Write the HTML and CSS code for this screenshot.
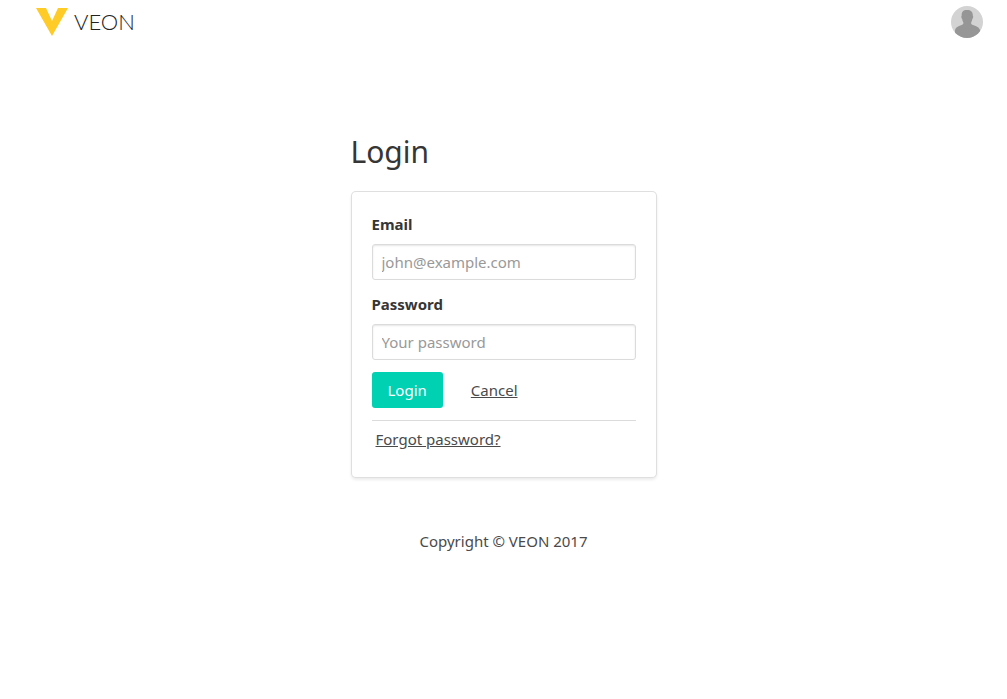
FILE: index.html
```html
<!DOCTYPE html>
<html lang="en">
<head>
<meta charset="utf-8">
<meta name="viewport" content="width=device-width, initial-scale=1">
<title>Login</title>
<link rel="stylesheet" href="styles.css">
</head>
<body>
<header class="nav">
  <a class="brand" href="#">
    <svg class="brand-mark" viewBox="0 0 32 28" aria-hidden="true"><path d="M0 0h10l6 13 6-13h10L16 28z" fill="#ffcb27"/></svg>
    <span class="brand-name">VEON</span>
  </a>
  <a class="account" href="#" aria-label="Account">
    <svg class="avatar" viewBox="0 0 32 32" aria-hidden="true">
      <defs><clipPath id="disc"><circle cx="16" cy="16" r="16"/></clipPath></defs>
      <g clip-path="url(#disc)">
        <rect width="32" height="32" fill="#d3d3d3"/>
        <path d="M16 4c-4 0-5.500 2-5.300 5.500-.7.500-.4 3 .5 3.500.2 1.400.5 2.300 1.100 3.200v1.800C11 19.500 5 20 4 24v8h25v-8c-1-4-7.500-4.500-8.800-6v-1.800c.6-.9.900-1.800 1.100-3.200.9-.5 1.200-3 .5-3.500C22 6 20 4 16 4z" fill="#969696"/>
      </g>
    </svg>
  </a>
</header>
<main class="content">
  <h1 class="title">Login</h1>
  <form class="box">
    <label class="label" for="email">Email</label>
    <input class="input" id="email" type="email" placeholder="john@example.com">
    <label class="label" for="password">Password</label>
    <input class="input" id="password" type="password" placeholder="Your password">
    <div class="actions">
      <button class="button" type="submit">Login</button>
      <a class="link" href="#">Cancel</a>
    </div>
    <div class="extra"><a class="link" href="#">Forgot password?</a></div>
  </form>
</main>
<footer class="footer">Copyright © VEON 2017</footer>
</body>
</html>
```
FILE: styles.css
```css
* { box-sizing: border-box; }
body {
  margin: 0;
  background: #fff;
  color: #363636;
  font-family: "Noto Sans", "Open Sans", sans-serif;
  font-size: 15px;
  line-height: 24px;
}
.nav {
  display: flex;
  justify-content: space-between;
  align-items: flex-start;
  padding: 6px 24px 0 36px;
}
.brand {
  display: flex;
  align-items: center;
  gap: 6px;
  padding-top: 2px;
  color: #222;
  text-decoration: none;
}
.brand-mark { width: 32px; height: 28px; }
.brand-name {
  font-family: Lato, sans-serif;
  font-size: 22px;
  font-weight: 300;
  line-height: 28px;
}
.account, .avatar { display: block; width: 32px; height: 32px; }
.content {
  width: 306px;
  max-width: 100%;
  margin: 96px auto 0;
}
.title {
  margin: 0 0 21px;
  font-size: 30px;
  font-weight: 400;
  line-height: 36px;
}
.box {
  padding: 21px;
  border-radius: 5px;
  box-shadow: 0 2px 3px rgba(10, 10, 10, .08), inset 0 0 0 1px rgba(10, 10, 10, .13);
}
.label {
  display: block;
  margin-bottom: 8px;
  font-weight: 700;
}
.input {
  display: block;
  width: 100%;
  height: 36px;
  margin-bottom: 12px;
  padding: 0 9px;
  border: 1px solid #dbdbdb;
  border-radius: 3px;
  background: #fff;
  box-shadow: inset 0 1px 2px rgba(10, 10, 10, .1);
  color: #363636;
  font: inherit;
}
.input::placeholder { color: #999; opacity: 1; }
.actions {
  display: flex;
  align-items: center;
  gap: 28px;
}
.button {
  height: 36px;
  padding: 0 16px;
  border: 0;
  border-radius: 3px;
  background: #00d1b2;
  color: #fff;
  font: inherit;
}
.link { color: #4a4a4a; }
.extra {
  margin-top: 12px;
  padding: 6px 4px;
  border-top: 1px solid #dbdbdb;
}
.footer {
  padding: 51px 24px 24px;
  color: #4a4a4a;
  text-align: center;
}
```
